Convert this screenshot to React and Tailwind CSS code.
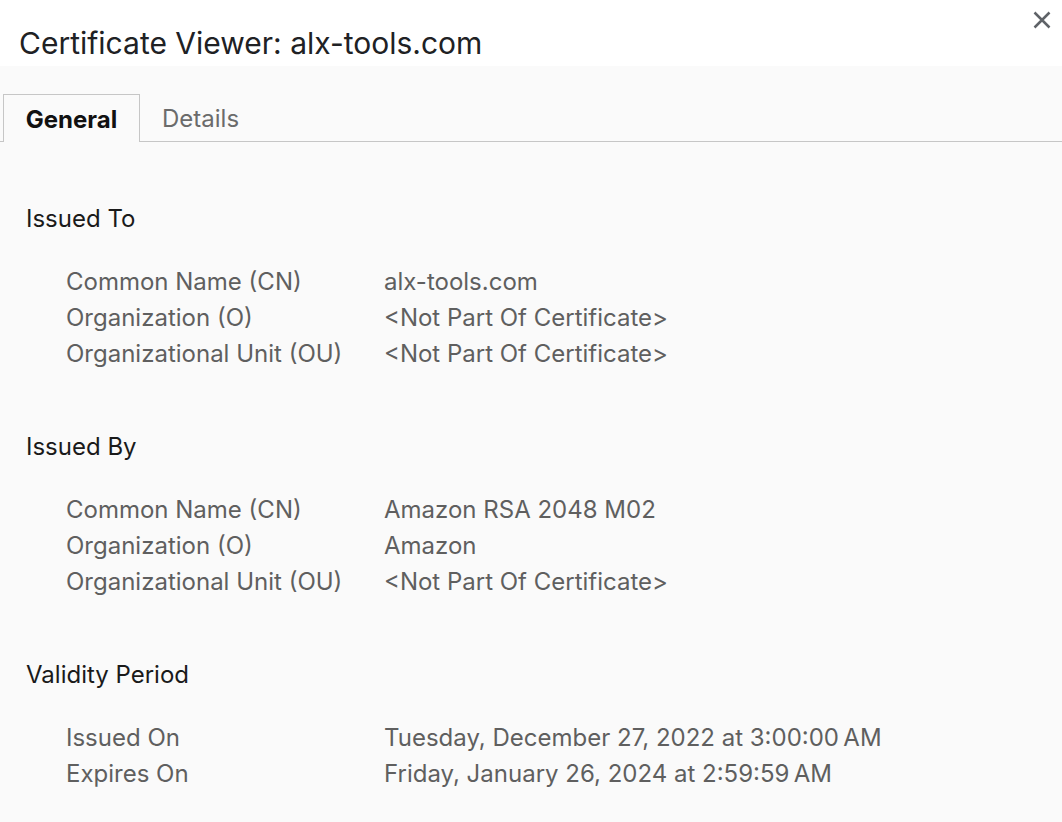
import React from 'react'

const sections = [
  {
    title: 'Issued To',
    rows: [
      ['Common Name (CN)', 'alx-tools.com'],
      ['Organization (O)', '<Not Part Of Certificate>'],
      ['Organizational Unit (OU)', '<Not Part Of Certificate>'],
    ],
  },
  {
    title: 'Issued By',
    rows: [
      ['Common Name (CN)', 'Amazon RSA 2048 M02'],
      ['Organization (O)', 'Amazon'],
      ['Organizational Unit (OU)', '<Not Part Of Certificate>'],
    ],
  },
  {
    title: 'Validity Period',
    rows: [
      ['Issued On', 'Tuesday, December 27, 2022 at 3:00:00\u202FAM'],
      ['Expires On', 'Friday, January 26, 2024 at 2:59:59\u202FAM'],
    ],
  },
]

const App = () => {
  return (
    <div className="w-[1062px] h-[822px] overflow-hidden bg-[#fafafa] font-['Inter','Liberation_Sans',sans-serif]">
      {/* Header */}
      <header className="relative h-[66px] bg-white pl-[19px] pt-[25px]">
        <h1 className="text-[30px] leading-[36px] text-[#202124]">
          Certificate Viewer: alx-tools.com
        </h1>
        <button className="absolute right-[10px] top-[10px] text-[#5f6368]">
          <svg width="20" height="20" viewBox="0 0 20 20">
            <path d="M2.5 2.5 L17.5 17.5 M17.5 2.5 L2.5 17.5" stroke="currentColor" strokeWidth="2.5" />
          </svg>
        </button>
      </header>

      {/* Tabs */}
      <div className="flex items-end pt-[28px] pl-[3px] border-b border-[#c6c6c6] h-[76px]">
        <div className="h-[48px] w-[137px] -mb-px pt-[2px] border border-b-0 border-[#c6c6c6] bg-[#fafafa] flex items-center justify-center text-[24px] font-bold text-[#111]">
          General
        </div>
        <div className="h-[48px] px-[22px] pt-[4px] flex items-center text-[24px] text-[#6b6b6b]">
          Details
        </div>
      </div>

      {/* Content */}
      <main className="pt-[59px] pl-[26px]">
        {sections.map((s, i) => (
          <section key={s.title} className={i > 0 ? 'mt-[57px]' : ''}>
            <h2 className="text-[24px] leading-[36px] text-[#1a1a1a]">{s.title}</h2>
            <div className="mt-[27px] pl-[40px]">
              {s.rows.map(([k, v]) => (
                <div key={k} className="flex text-[24px] leading-[36px] text-[#5f5f5f]">
                  <div className="w-[318px] shrink-0">{k}</div>
                  <div>{v}</div>
                </div>
              ))}
            </div>
          </section>
        ))}
      </main>
    </div>
  )
}

export default App
